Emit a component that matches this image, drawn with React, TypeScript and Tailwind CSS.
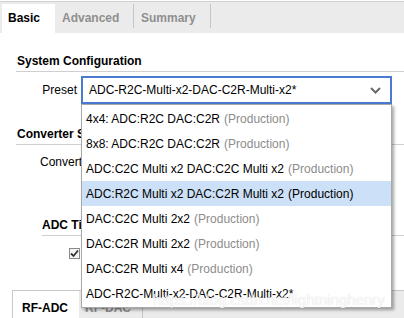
import React from "react";

const items: { main: string; prod: boolean }[] = [
  { main: "4x4: ADC:R2C DAC:C2R", prod: true },
  { main: "8x8: ADC:R2C DAC:C2R", prod: true },
  { main: "ADC:C2C Multi x2 DAC:C2C Multi x2", prod: true },
  { main: "ADC:R2C Multi x2 DAC:C2R Multi x2", prod: true },
  { main: "DAC:C2C Multi 2x2", prod: true },
  { main: "DAC:C2R Multi 2x2", prod: true },
  { main: "DAC:C2R Multi x4", prod: true },
  { main: "ADC-R2C-Multi-x2-DAC-C2R-Multi-x2*", prod: false },
];

export default function App() {
  return (
    <div className="relative w-[404px] h-[318px] overflow-hidden bg-white text-[12px] text-black font-['Liberation_Sans',Arial,sans-serif]">
      {/* top tabs */}
      <div className="mt-[1px] h-[32px] bg-[#ebebeb] border-t border-[#d0d0d0] flex items-start pt-[2px]">
        <div className="ml-[2px] w-[53px] h-[29px] bg-white pl-[6px] flex items-center pb-[1px] font-bold leading-[14px]">Basic</div>
        <div className="w-[78px] h-[24px] pl-[7px] flex items-center pt-[3px] font-bold text-[#8f8f8f] leading-[14px]">Advanced</div>
        <div className="w-px h-[24px] bg-[#c4c4c4]" />
        <div className="w-[76px] h-[24px] pl-[7px] flex items-center pt-[3px] font-bold text-[#8f8f8f] leading-[14px]">Summary</div>
        <div className="w-px h-[24px] bg-[#c4c4c4]" />
      </div>

      {/* System Configuration */}
      <div className="ml-[16px] mt-[21px] pl-[1px] pb-[3px] leading-[14px] font-bold border-b border-[#cfcfcf]">System Configuration</div>
      <div className="mt-[4px] flex items-center">
        <div className="w-[77px] text-right leading-[14px]">Preset</div>
        <div className="ml-[4px] w-[311px] h-[28px] border-2 border-[#4a7bd0] flex items-center justify-between pl-[6px] pr-[8px]">
          <span className="leading-[14px]">ADC-R2C-Multi-x2-DAC-C2R-Multi-x2*</span>
          <svg width="11" height="7" viewBox="0 0 11 7" className="mr-[1px]">
            <polyline points="1,1 5.5,5.5 10,1" fill="none" stroke="#6a6a6a" strokeWidth="2" />
          </svg>
        </div>
      </div>

      {/* Converter Setup */}
      <div className="ml-[16px] mt-[23px] pl-[1px] pb-[3px] leading-[14px] font-bold border-b border-[#cfcfcf]">Converter Setup</div>
      <div className="mt-[10px] ml-[40px] leading-[14px]">Converter Config</div>

      {/* ADC Tile */}
      <div className="ml-[42px] mt-[49px] pb-[3px] leading-[14px] font-bold border-b border-[#cfcfcf]">ADC Tile Config</div>
      <div className="mt-[12px] ml-[69px] w-[11px] h-[11px] border border-[#8a8a8a] bg-[#f4f4f4] flex items-center justify-center">
        <svg width="9" height="9" viewBox="0 0 9 9">
          <polyline points="1,4.5 3.5,7 8,1.5" fill="none" stroke="#333" strokeWidth="1.8" />
        </svg>
      </div>

      {/* bottom tabs */}
      <div className="ml-[12px] mt-[31px] h-[30px] bg-[#ebebeb] border-t border-l border-[#c8c8c8] flex items-stretch">
        <div className="w-[66px] bg-white pl-[9px] flex items-center pt-[4px] font-bold leading-[14px]">RF-ADC</div>
        <div className="w-[63px] pl-[6px] flex items-center pt-[4px] font-bold text-[#8f8f8f] leading-[14px]">RF-DAC</div>
        <div className="w-px bg-[#c4c4c4]" />
      </div>

      {/* dropdown list */}
      <div className="absolute left-[81px] top-[104px] w-[311px] bg-white border border-[#a8a8a8] py-[1px] shadow-[2px_2px_3px_rgba(0,0,0,0.35)]">
        {items.map((it, i) => (
          <div
            key={i}
            className={
              "h-[25px] pl-[4px] flex items-center leading-[14px] whitespace-nowrap " +
              (i === 3 ? "bg-[#cce0f7]" : "")
            }
          >
            <span>{it.main}</span>
            {it.prod && (
              <span className={"ml-[4px] " + (i === 3 ? "text-black" : "text-[#8c8c8c]")}>(Production)</span>
            )}
          </div>
        ))}
      </div>

      {/* watermark */}
      <div className="absolute left-[153px] top-[291px] text-[15px] leading-[18px] text-white/85 [text-shadow:0_0_1px_rgba(0,0,0,0.18)] whitespace-nowrap">
        https://blog.csdn.net/lightninghenry
      </div>
    </div>
  );
}
